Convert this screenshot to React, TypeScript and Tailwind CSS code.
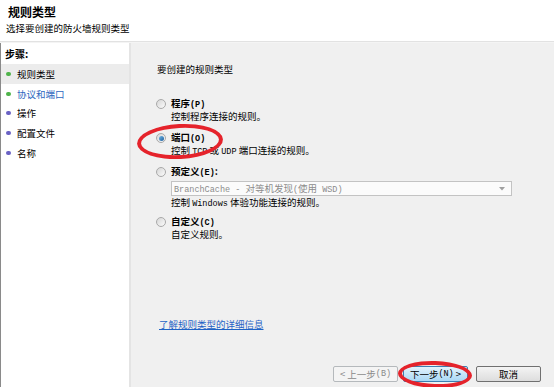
import React from "react";

const FONT = { fontFamily: '"Noto Sans CJK SC", "Liberation Sans", sans-serif' };

function M({ children }: { children: React.ReactNode }) {
  return (
    <span className="text-[8.5px]" style={{ fontFamily: '"Liberation Mono", "Noto Sans CJK SC", monospace' }}>
      {children}
    </span>
  );
}

function Radio({ checked }: { checked?: boolean }) {
  return (
    <span className="relative flex h-[10px] w-[10px] shrink-0 items-center justify-center rounded-full border border-[#a9a9a9] bg-gradient-to-br from-[#d6d6d6] to-[#fbfbfb]">
      {checked && <span className="h-[5px] w-[5px] rounded-full bg-gradient-to-br from-[#6fb7e8] to-[#1d5f9c]" />}
    </span>
  );
}

function Option({
  label,
  desc,
  checked,
  children,
  mt,
}: {
  label: React.ReactNode;
  desc: React.ReactNode;
  checked?: boolean;
  children?: React.ReactNode;
  mt: string;
}) {
  return (
    <div className={mt}>
      <div className="flex h-[12px] items-center gap-[5px] pl-[25px]">
        <Radio checked={checked} />
        <span className="font-bold leading-[12px]">{label}</span>
      </div>
      <div className="pl-[40px]">
        {children}
        <div className="h-[12px] leading-[12px]">{desc}</div>
      </div>
    </div>
  );
}

export default function App() {
  const steps = [
    { t: "规则类型", c: "bg-[#4fb34a]", active: true, color: "text-black" },
    { t: "协议和端口", c: "bg-[#4fb34a]", color: "text-[#2c66c0]" },
    { t: "操作", c: "bg-[#6a62c4]", color: "text-black" },
    { t: "配置文件", c: "bg-[#6a62c4]", color: "text-black" },
    { t: "名称", c: "bg-[#6a62c4]", color: "text-black" },
  ];
  return (
    <div className="relative flex h-[387px] w-[554px] flex-col overflow-hidden bg-white text-[9.5px] text-black" style={FONT}>
      {/* Header */}
      <div className="flex h-[42px] shrink-0 flex-col border-b border-[#e2e2e2] bg-white pl-[8px]">
        <div className="mt-[4px] h-[16px] text-[12px] font-bold leading-[16px]">规则类型</div>
        <div className="mt-[2px] h-[12px] leading-[12px]" style={{ marginLeft: -2 }}>
          选择要创建的防火墙规则类型
        </div>
      </div>
      <div className="h-[1px] shrink-0 bg-[#f4f4f4]" />
      {/* Body */}
      <div className="flex flex-1">
        {/* Left steps */}
        <div className="w-[131px] shrink-0 border-l border-r-2 border-l-[#8a8a8a] border-r-[#e4e4e4] bg-white">
          <div className="flex h-[21px] items-center pl-[4px] text-[10px] font-bold">步骤:</div>
          {steps.map((s) => (
            <div
              key={s.t}
              className={`flex h-[19.75px] items-center ${s.active ? "bg-[#ececec]" : ""}`}
            >
              <span className={`ml-[5px] h-[4px] w-[5px] rounded-full ${s.c}`} />
              <span className={`ml-[6px] leading-[12px] ${s.color}`}>{s.t}</span>
            </div>
          ))}
        </div>
        {/* Main */}
        <div className="flex flex-1 flex-col bg-[#f0f0f0]">
          <div className="mt-[20px] h-[12px] pl-[26px] leading-[12px]">要创建的规则类型</div>
          <Option mt="mt-[23px]" label={<>程序<M>(P)</M></>} desc="控制程序连接的规则。" />
          <Option
            mt="mt-[10px]"
            checked
            label={<>端口<M>(O)</M></>}
            desc={<>控制 <M>TCP</M> 或 <M>UDP</M> 端口连接的规则。</>}
          />
          <Option
            mt="mt-[10px]"
            label={<>预定义<M>(E)</M>:</>}
            desc={<>控制 <M>Windows</M> 体验功能连接的规则。</>}
          >
            <div className="mt-[3px] flex h-[15px] w-[341px] items-center justify-between border border-[#c3c3c3] bg-[#fbfbfb] pl-[2px] pr-[6px] text-[#8c8c8c]">
              <span className="leading-[12px]">
                <M>BranchCache - </M>对等机发现<M>(</M>使用<M> WSD)</M>
              </span>
              <svg width="6" height="4" viewBox="0 0 6 4">
                <path d="M0 0 L6 0 L3 3.5 Z" fill="#a0a0a0" />
              </svg>
            </div>
          </Option>
          <Option mt="mt-[8px]" label={<>自定义<M>(C)</M></>} desc="自定义规则。" />
          <div className="mt-auto h-[12px] pl-[28px] leading-[12px]">
            <span className="text-[#1f63c6] underline">了解规则类型的详细信息</span>
          </div>
          <div className="mb-[5px] mt-[36px] flex justify-end pr-[13px]">
            <div className="flex h-[16px] w-[65px] items-center justify-center rounded-[2px] border border-[#b5b9bc] bg-[#f4f4f4] text-[#8a8a8a]">
              &lt; 上一步<M>(B)</M>
            </div>
            <div className="ml-[5px] flex h-[16px] w-[65px] items-center justify-center rounded-[2px] border border-[#3c7fb1] bg-gradient-to-b from-[#e3f3fc] to-[#a9d8f5]">
              下一步<M>(N)</M>&nbsp;&gt;
            </div>
            <div className="ml-[8px] flex h-[16px] w-[65px] items-center justify-center rounded-[2px] border border-[#707070] bg-gradient-to-b from-[#f4f4f4] to-[#dddddd]">
              取消
            </div>
          </div>
        </div>
      </div>
      {/* Red annotation ellipses */}
      <div className="pointer-events-none absolute left-[137px] top-[124px] h-[35px] w-[86px] -rotate-3 rounded-[50%] border-[4px] border-[#e5232b]" />
      <div className="pointer-events-none absolute left-[398px] top-[361px] h-[27px] w-[74px] rotate-2 rounded-[50%] border-[4px] border-[#e5232b]" />
    </div>
  );
}
